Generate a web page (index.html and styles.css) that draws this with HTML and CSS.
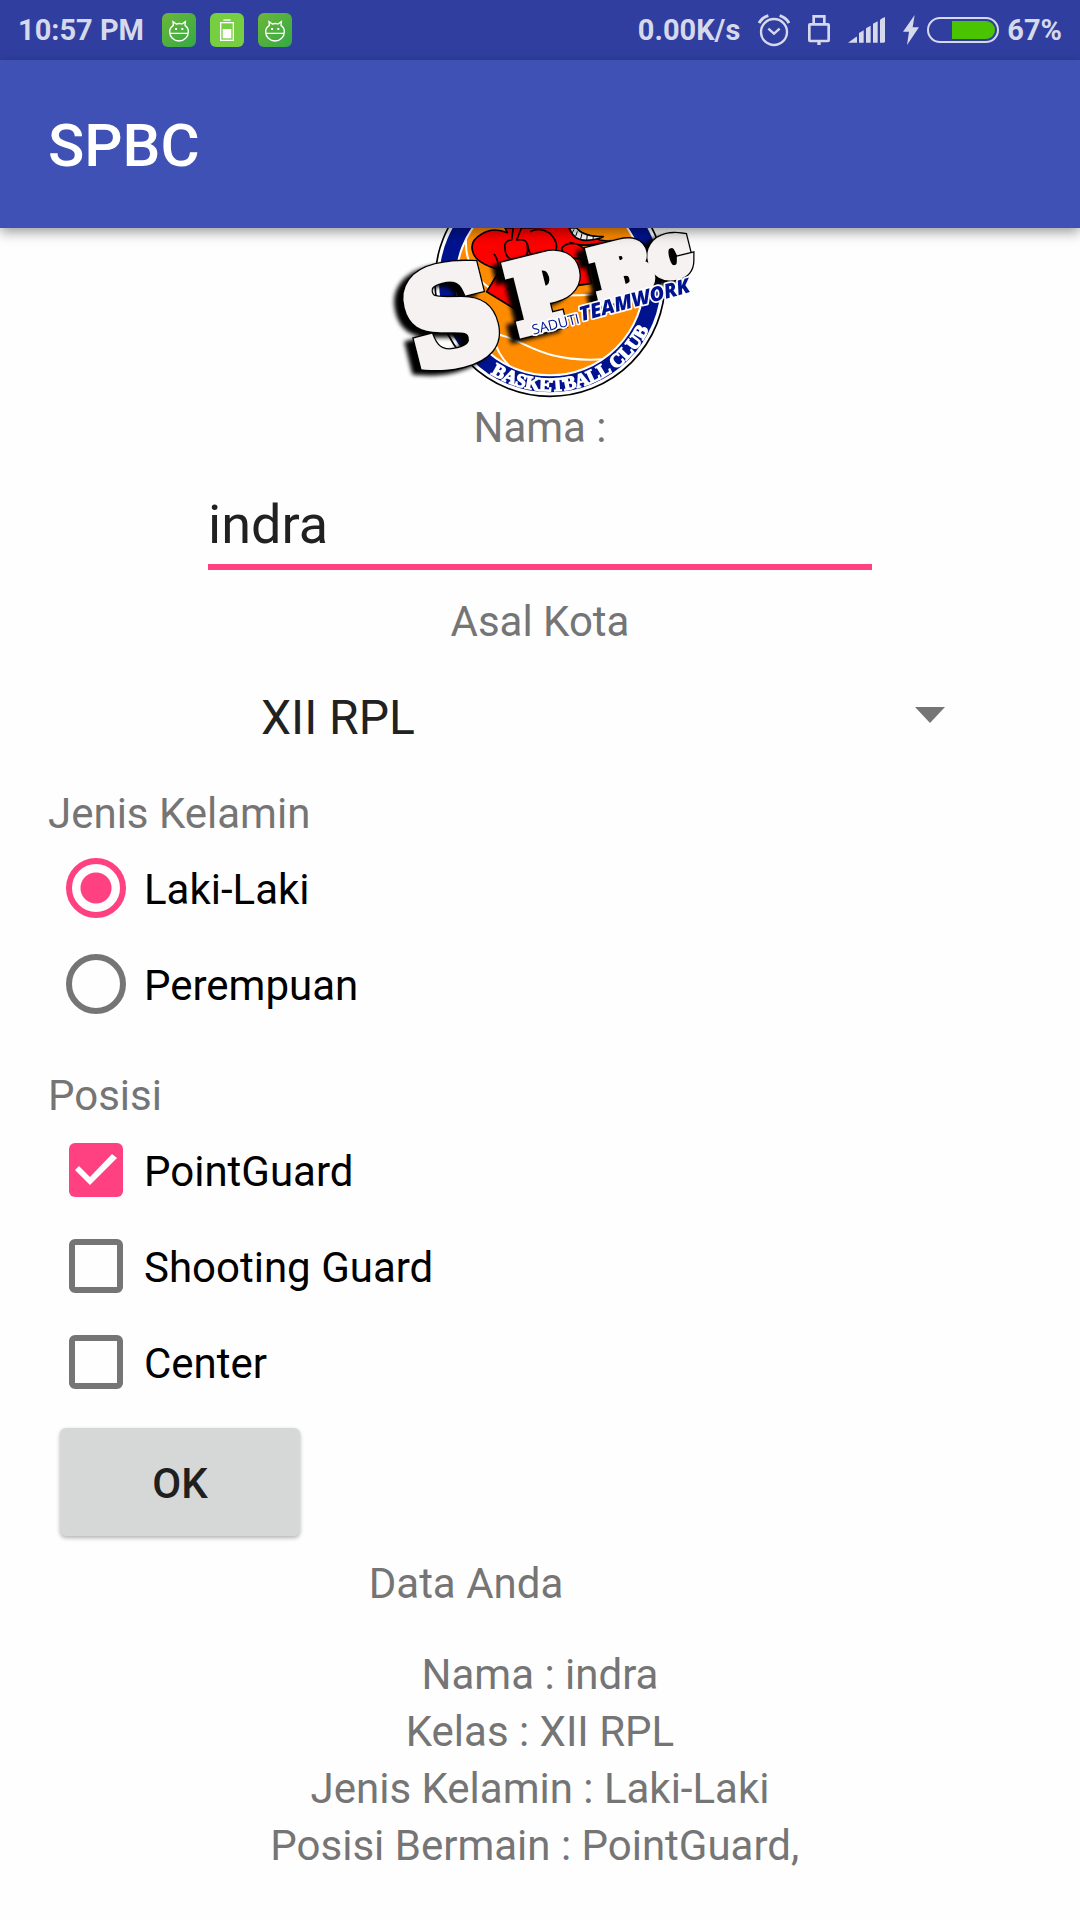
FILE: index.html
```html
<!DOCTYPE html>
<html lang="id">
<head>
<meta charset="utf-8">
<meta name="viewport" content="width=device-width, initial-scale=1">
<title>SPBC</title>
<link rel="stylesheet" href="styles.css">
</head>
<body>
<div class="status-bar">
  <div class="status-group">
    <span class="clock">10:57 PM</span>
    <svg class="app-icon" viewBox="0 0 102 102" aria-hidden="true">
      <defs>
        <linearGradient id="green" x1="0" y1="0" x2="1" y2="1"><stop offset="0" stop-color="#6db63a"/><stop offset="1" stop-color="#33a944"/></linearGradient>
        <g id="robot">
          <rect width="102" height="102" rx="18" fill="url(#green)"/>
          <path d="M34 37 33 26 43 33Q52 30 60 33L70 26 69 37Q79 44 79 56A28 28 0 0 1 23 56Q23 44 34 37ZM25 61H78" fill="none" stroke="#fff" stroke-width="4"/>
          <path d="M39 45h6v6h-6zM58 45h6v6h-6z" fill="#fff"/>
        </g>
      </defs>
      <use href="#robot"/>
    </svg>
    <svg class="app-icon" viewBox="0 0 102 102" aria-hidden="true">
      <rect width="102" height="102" rx="18" fill="#76cf40"/>
      <path d="M40 19h22v4H40z" fill="#fff"/>
      <rect x="32" y="29" width="38" height="53" fill="none" stroke="#fff" stroke-width="4"/>
      <path d="M38 48h26v28H38z" fill="#fff"/>
    </svg>
    <svg class="app-icon" viewBox="0 0 102 102" aria-hidden="true"><use href="#robot"/></svg>
  </div>
  <div class="status-group status-right">
    <span>0.00K/s</span>
    <svg width="32" height="34" viewBox="0 0 96 102" fill="none" stroke="#d6d9ec" aria-hidden="true">
      <circle cx="48" cy="57" r="39" stroke-width="7"/>
      <path d="M31 47 48 62 65 47" stroke-width="7"/>
      <path d="M3 30Q13 13 31 8M93 30Q83 13 65 8" stroke-width="9"/>
    </svg>
    <svg width="22" height="30" viewBox="0 0 66 90" fill="none" stroke="#d6d9ec" stroke-width="8" aria-hidden="true">
      <rect x="4" y="28" width="58" height="50" rx="2"/>
      <path d="M17 27V4H49V27"/>
      <path d="M28 84h10" stroke-width="12"/>
    </svg>
    <svg width="37" height="26" viewBox="0 0 111 78" fill="#d6d9ec" aria-hidden="true">
      <path d="M0 77 24 60Q27 58 27 62V77ZM33 48 47 40V77H33ZM54 34 68 26V77H54ZM75 20 89 13V77H75ZM96 9Q99 4 111 0V74L108 77H96Z"/>
    </svg>
    <span class="power">
      <svg width="16" height="30" viewBox="0 0 48 90" fill="#d6d9ec" aria-hidden="true"><path d="M35 0 0 50H18L12 90 48 37H29Z"/></svg>
      <svg width="72" height="26" viewBox="0 0 216 78" aria-hidden="true">
        <rect x="3" y="3" width="210" height="72" rx="36" fill="none" stroke="#d6d9ec" stroke-width="6"/>
        <path d="M75 12H177A27 27 0 0 1 177 66H75Z" fill="#4ac400"/>
      </svg>
      <span>67%</span>
    </span>
  </div>
</div>
<header class="app-bar"><h1>SPBC</h1></header>
<main class="content">
  <svg class="logo" viewBox="0 24 1020 516" role="img" aria-label="SPBC Saduti Teamwork Basketball Club">
    <defs>
      <filter id="soft" x="-20%" y="-20%" width="140%" height="140%"><feGaussianBlur stdDeviation="7"/></filter>
      <clipPath id="ball"><circle cx="540" cy="184" r="280"/></clipPath>
      <path id="ring-line" d="M362 461A330 330 0 0 0 870 184"/>
      <g id="letters">
        <g transform="translate(242 286) rotate(-14)"><text y="136" font-size="374">S</text></g>
        <g transform="translate(526 216) rotate(-14)"><text y="99" font-size="272">P</text></g>
        <g transform="translate(757 150) rotate(-14)"><text y="73" font-size="200">B</text></g>
        <g transform="translate(900 112) rotate(-14)"><text y="50" font-size="138">C</text></g>
      </g>
      <g id="letters-bold">
        <use href="#letters"/>
        <use href="#letters" x="8" y="-2"/>
      </g>
    </defs>
    <circle cx="540" cy="184" r="345" fill="#fff" stroke="#000" stroke-width="5"/>
    <circle cx="540" cy="184" r="333" fill="#00138f"/>
    <circle cx="540" cy="184" r="282" fill="#ff8c00" stroke="#fff" stroke-width="6"/>
    <g clip-path="url(#ball)" fill="none" stroke="#fff" stroke-width="6">
      <path d="M288 60Q285 140 340 190T520 230 840 230M370 350Q380 400 420 440M365 340C460 350 500 430 700 418"/>
    </g>
    <g stroke="#000" stroke-width="5" stroke-linejoin="round">
      <path d="M310 100Q295 65 335 42Q370 20 412 38L405 24H480L590 20 690 60Q715 65 722 62Q728 78 712 80L690 70Q640 82 600 68Q625 85 650 92L645 110 665 190 600 200 540 150 480 180 440 270 350 215 390 150Q320 130 310 100Z" fill="#f00"/>
      <path d="M405 85Q400 62 425 60L430 22H455L440 60Q475 55 472 80Q478 115 445 122Q405 122 405 85ZM480 35Q510 20 540 40Q575 75 548 112Q510 130 485 112Q475 90 472 72M372 102Q390 125 382 160M575 85Q590 65 620 72Q655 85 645 115Q610 120 580 102Z" fill="#f00"/>
      <path d="M598 24Q610 62 650 61Q690 58 700 50Q640 50 620 24Z" fill="#fff"/>
      <path d="M612 28 606 40M622 34 617 49M636 40 632 57M652 44 650 60M670 48 669 59" stroke-width="3"/>
    </g>
    <g font-family="DejaVu Serif, serif" font-weight="700" text-anchor="middle">
      <use href="#letters" x="-24" y="12" fill="#000" stroke="#000" stroke-width="44" filter="url(#soft)"/>
      <use href="#letters" fill="#000" stroke="#000" stroke-width="44"/>
      <use href="#letters" fill="#f6f2f2" stroke="#f6f2f2" stroke-width="36"/>
    </g>
    <g fill="#00138f" stroke="#fff" stroke-width="10" paint-order="stroke" stroke-linejoin="round">
      <g transform="translate(490 344) rotate(-14)"><text font-family="Open Sans, sans-serif" font-size="42">SADUTI</text></g>
      <g transform="translate(634 304) rotate(-15)"><text font-family="Open Sans, sans-serif" font-weight="800" font-style="italic" font-size="60">TEAMWORK</text></g>
    </g>
    <text font-family="Liberation Serif, serif" font-weight="700" font-size="57" fill="#fff" stroke="#fff" stroke-width="4"><textPath href="#ring-line">BASKETBALL CLUB</textPath></text>
  </svg>

  <form class="form">
    <label class="caption centered" for="nama">Nama :</label>
    <input class="name-input" id="nama" type="text" value="indra">

    <label class="caption centered" for="kota">Asal Kota</label>
    <div class="select-wrap">
      <select id="kota"><option>XII RPL</option></select>
    </div>

    <fieldset class="group">
      <legend class="caption">Jenis Kelamin</legend>
      <label class="option"><input class="radio" type="radio" name="jenis" checked>Laki-Laki</label>
      <label class="option"><input class="radio" type="radio" name="jenis">Perempuan</label>
    </fieldset>

    <fieldset class="group">
      <legend class="caption">Posisi</legend>
      <label class="option"><input class="check" type="checkbox" checked>PointGuard</label>
      <label class="option"><input class="check" type="checkbox">Shooting Guard</label>
      <label class="option"><input class="check" type="checkbox">Center</label>
    </fieldset>

    <button class="ok" type="button">OK</button>
  </form>

  <section class="result">
    <h2 class="result-title">Data Anda</h2>
    <p class="result-line">Nama : indra</p>
    <p class="result-line">Kelas : XII RPL</p>
    <p class="result-line">Jenis Kelamin : Laki-Laki</p>
    <p class="result-line">Posisi Bermain : PointGuard, </p>
  </section>
</main>
</body>
</html>
```
FILE: styles.css
```css
* {
  box-sizing: border-box;
}

body {
  margin: 0;
  background: #fefefe;
  color: #757575;
  font-family: Roboto, sans-serif;
  font-size: 42px;
  line-height: 56px;
}

h1, h2, p {
  margin: 0;
  font-weight: 400;
}

svg {
  display: block;
  flex: none;
}

.status-bar {
  display: flex;
  justify-content: space-between;
  align-items: center;
  height: 60px;
  padding: 0 18px;
  background: #303f9f;
  color: #d6d9ec;
  font-size: 29px;
  font-weight: 700;
  line-height: 36px;
}

.status-group {
  display: flex;
  align-items: center;
  gap: 14px;
}

.status-right {
  gap: 18px;
}

.clock {
  padding-right: 4px;
}

.app-icon {
  width: 34px;
  height: 34px;
}

.power {
  display: flex;
  align-items: center;
  gap: 8px;
}

.app-bar {
  position: relative;
  z-index: 1;
  display: flex;
  align-items: center;
  height: 168px;
  padding: 0 48px;
  background: #3f51b5;
  color: #fff;
  box-shadow: 0 4px 12px rgba(0, 0, 0, 0.4);
}

.app-bar h1 {
  padding-top: 4px;
  font-size: 60px;
  font-weight: 500;
  line-height: 72px;
}

.content {
  padding: 0 48px;
}

.logo {
  width: 340px;
  height: 172px;
  margin: 0 auto;
}

.form {
  display: flex;
  flex-direction: column;
}

.caption {
  display: block;
  padding: 0;
}

.centered {
  text-align: center;
}

.name-input {
  margin: 28px 160px 24px;
  height: 86px;
  padding: 0;
  border: 0;
  border-bottom: 6px solid #ff4081;
  border-radius: 0;
  background: none;
  color: #212121;
  font: inherit;
  font-size: 54px;
  outline: 0;
}

.select-wrap {
  position: relative;
  margin: 0 84px 0 160px;
}

.select-wrap::after {
  content: "";
  position: absolute;
  top: 57px;
  right: 3px;
  border: 15px solid transparent;
  border-top: 16px solid #757575;
  border-bottom: 0;
  pointer-events: none;
}

.select-wrap select {
  display: block;
  width: 100%;
  height: 136px;
  padding: 0 53px;
  appearance: none;
  border: 0;
  background: none;
  color: #212121;
  font: inherit;
  font-size: 48px;
}

.group {
  min-width: 0;
  margin: 0;
  padding: 0;
  border: 0;
}

.group + .group {
  margin-top: 34px;
}

.option {
  display: flex;
  align-items: center;
  height: 96px;
  color: #000;
}

.radio,
.check {
  flex: none;
  appearance: none;
  border: 6px solid #757575;
}

.radio {
  width: 60px;
  height: 60px;
  margin: 0 18px 4px;
  border-radius: 50%;
}

.radio:checked {
  border-color: #ff4081;
  background: radial-gradient(circle, #ff4081 15px, transparent 16px);
}

.check {
  width: 54px;
  height: 54px;
  margin: 0 21px 4px;
  border-radius: 6px;
}

.check:checked {
  border: 0;
  background: #ff4081;
}

.check:checked::before {
  content: "";
  display: block;
  width: 54px;
  height: 54px;
  background: #fff;
  clip-path: polygon(6px 27px, 10px 23px, 21px 34px, 43px 11px, 48px 15px, 21px 42px);
}

.ok {
  align-self: flex-start;
  width: 240px;
  height: 108px;
  margin: 16px 12px 20px;
  padding: 4px 0 0;
  border: 0;
  border-radius: 6px;
  background: #d6d7d7;
  color: #1f1f1f;
  font: inherit;
  font-weight: 500;
  box-shadow: 0 2px 4px rgba(0, 0, 0, 0.3);
}

.result {
  text-align: center;
}

.result-title {
  margin-bottom: 34px;
  padding-right: 148px;
  font-size: 42px;
}

.result-line {
  line-height: 57px;
  white-space: pre;
}
```
